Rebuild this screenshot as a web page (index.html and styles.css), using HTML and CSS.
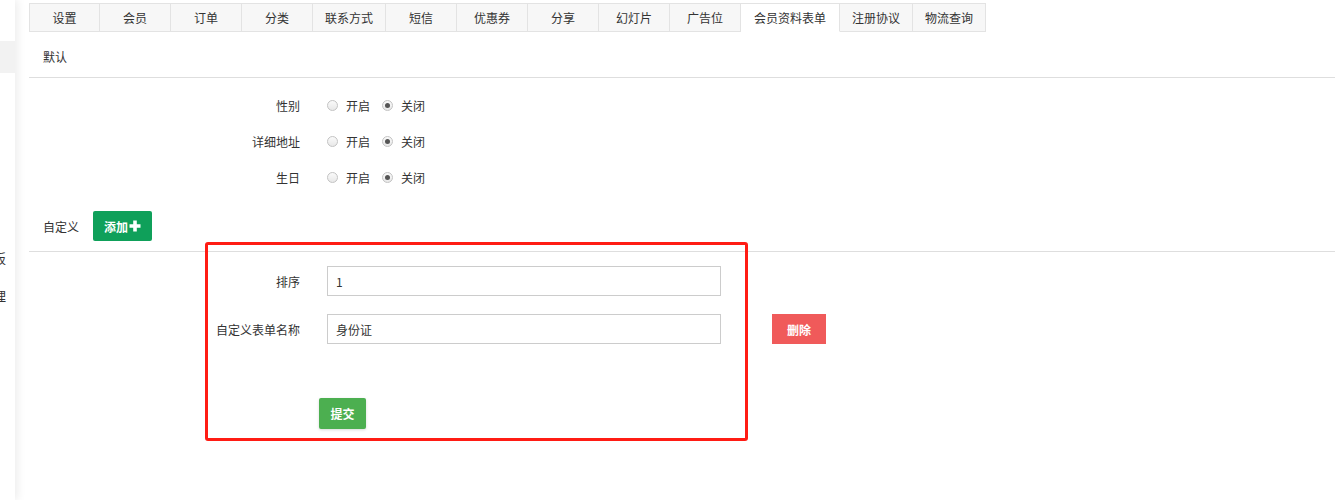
FILE: index.html
```html
<!DOCTYPE html>
<html lang="zh-CN">
<head>
<meta charset="utf-8">
<title>会员资料表单</title>
<link rel="stylesheet" href="styles.css">
</head>
<body>
<div class="layout">
  <aside class="sidebar">
    <div class="side-active"></div>
    <ul class="side-menu">
      <li>模板</li>
      <li>管理</li>
    </ul>
  </aside>
  <main class="main">
    <nav class="tabs">
      <a class="tab">设置</a>
      <a class="tab">会员</a>
      <a class="tab">订单</a>
      <a class="tab">分类</a>
      <a class="tab">联系方式</a>
      <a class="tab">短信</a>
      <a class="tab">优惠券</a>
      <a class="tab">分享</a>
      <a class="tab">幻灯片</a>
      <a class="tab">广告位</a>
      <a class="tab active">会员资料表单</a>
      <a class="tab">注册协议</a>
      <a class="tab">物流查询</a>
    </nav>

    <div class="section-title">默认</div>

    <div class="radio-form">
      <div class="form-row">
        <label class="label">性别</label>
        <div class="radios">
          <label class="radio"><input type="radio" name="sex"><span>开启</span></label>
          <label class="radio"><input type="radio" name="sex" checked><span>关闭</span></label>
        </div>
      </div>
      <div class="form-row">
        <label class="label">详细地址</label>
        <div class="radios">
          <label class="radio"><input type="radio" name="addr"><span>开启</span></label>
          <label class="radio"><input type="radio" name="addr" checked><span>关闭</span></label>
        </div>
      </div>
      <div class="form-row">
        <label class="label">生日</label>
        <div class="radios">
          <label class="radio"><input type="radio" name="birth"><span>开启</span></label>
          <label class="radio"><input type="radio" name="birth" checked><span>关闭</span></label>
        </div>
      </div>
    </div>

    <div class="custom-bar">
      <span class="custom-title">自定义</span>
      <button class="btn btn-add">添加<svg class="plus" viewBox="0 0 12 12" width="12" height="12"><path d="M6 0.5V11.5M0.5 6H11.5" stroke="#fff" stroke-width="3.6"/></svg></button>
    </div>

    <div class="custom-form">
      <div class="form-row input-row">
        <label class="label">排序</label>
        <input class="text-input" type="text" value="1">
      </div>
      <div class="form-row input-row">
        <label class="label">自定义表单名称</label>
        <input class="text-input" type="text" value="身份证">
        <button class="btn btn-del">删除</button>
      </div>
      <div class="submit-row">
        <button class="btn btn-submit">提交</button>
      </div>
    </div>

    <div class="highlight-box"></div>
  </main>
</div>
</body>
</html>
```

FILE: styles.css
```css
* { box-sizing: border-box; }

html, body {
  margin: 0;
  padding: 0;
  background: #fff;
}

body {
  font-family: "Noto Sans CJK SC", "Liberation Sans", sans-serif;
  font-size: 12px;
  color: #333;
  height: 500px;
  overflow: hidden;
}

.layout {
  display: flex;
  height: 500px;
}

/* sidebar (cropped) */
.sidebar {
  width: 15px;
  flex: 0 0 15px;
  background: #fff;
  overflow: hidden;
  padding-top: 41px;
  box-shadow: 3px 0 8px rgba(0, 0, 0, 0.07);
  position: relative;
  z-index: 1;
}

.side-active {
  height: 32px;
  background: #f2f2f2;
}

.side-menu {
  list-style: none;
  margin: 166px 0 0;
  padding: 0;
}

.side-menu li {
  height: 38px;
  line-height: 38px;
  display: flex;
  justify-content: flex-end;
  white-space: nowrap;
  padding-right: 9px;
  font-size: 13px;
  color: #333;
}

/* main */
.main {
  flex: 1;
  position: relative;
  padding-left: 14px;
}

.tabs {
  display: flex;
  margin-top: 3px;
  height: 29px;
}

.tab {
  display: block;
  min-width: 71px;
  padding: 0 12px;
  height: 29px;
  line-height: 27px;
  text-align: center;
  background: #f7f7f7;
  border: 1px solid #e3e3e3;
  border-left: none;
  color: #333;
  white-space: nowrap;
}

.tab:first-child {
  border-left: 1px solid #e3e3e3;
}

.tab.active {
  background: #fff;
  border-bottom-color: #fff;
  padding: 0 13px;
}

.section-title {
  height: 46px;
  padding: 15px 0 0 14px;
  line-height: 20px;
  border-bottom: 1px solid #dedede;
}

.radio-form {
  padding-top: 9px;
}

.form-row {
  display: flex;
  align-items: center;
  height: 36px;
}

.label {
  width: 271px;
  flex: 0 0 271px;
  text-align: right;
  margin-right: 27px;
  color: #333;
}

.radios {
  display: flex;
  align-items: center;
}

.radio {
  display: flex;
  align-items: center;
  margin-right: 12px;
}

.radio input {
  appearance: none;
  -webkit-appearance: none;
  width: 11px;
  height: 11px;
  margin: 0 8px 0 0;
  border: 1px solid #c3c3c3;
  border-radius: 50%;
  background: linear-gradient(#fafafa, #e8e8e8);
  position: relative;
}

.radio input:checked::after {
  content: "";
  position: absolute;
  left: 2px;
  top: 2px;
  width: 5px;
  height: 5px;
  border-radius: 50%;
  background: #555;
}

.custom-bar {
  display: flex;
  align-items: center;
  padding: 16px 0 10px 14px;
  border-bottom: 1px solid #dedede;
}

.custom-title {
  margin-right: 14px;
}

.btn {
  font-family: inherit;
  font-size: 12px;
  font-weight: bold;
  color: #fff;
  border: none;
  border-radius: 2px;
  cursor: pointer;
  padding: 0;
}

.btn-add {
  width: 59px;
  height: 30px;
  background: #0fa05a;
  display: flex;
  align-items: center;
  justify-content: center;
}

.plus {
  margin-left: 1px;
}

.custom-form {
  padding-top: 14px;
}

.input-row {
  height: 30px;
  margin-bottom: 18px;
}

.text-input {
  width: 394px;
  height: 30px;
  border: 1px solid #ccc;
  padding: 0 8px;
  font-family: inherit;
  font-size: 12px;
  color: #333;
  outline: none;
}

.btn-del {
  width: 54px;
  height: 30px;
  margin-left: 51px;
  background: #f05a5a;
  border-radius: 0;
}

.submit-row {
  padding-top: 36px;
  padding-left: 290px;
}

.btn-submit {
  width: 47px;
  height: 31px;
  background: #4caf50;
  box-shadow: 0 1px 3px rgba(0, 0, 0, 0.15);
}

/* annotation overlay */
.highlight-box {
  position: absolute;
  left: 190px;
  top: 242px;
  width: 543px;
  height: 199px;
  border: 3px solid #ff1c14;
  border-radius: 3px;
  pointer-events: none;
}
```
